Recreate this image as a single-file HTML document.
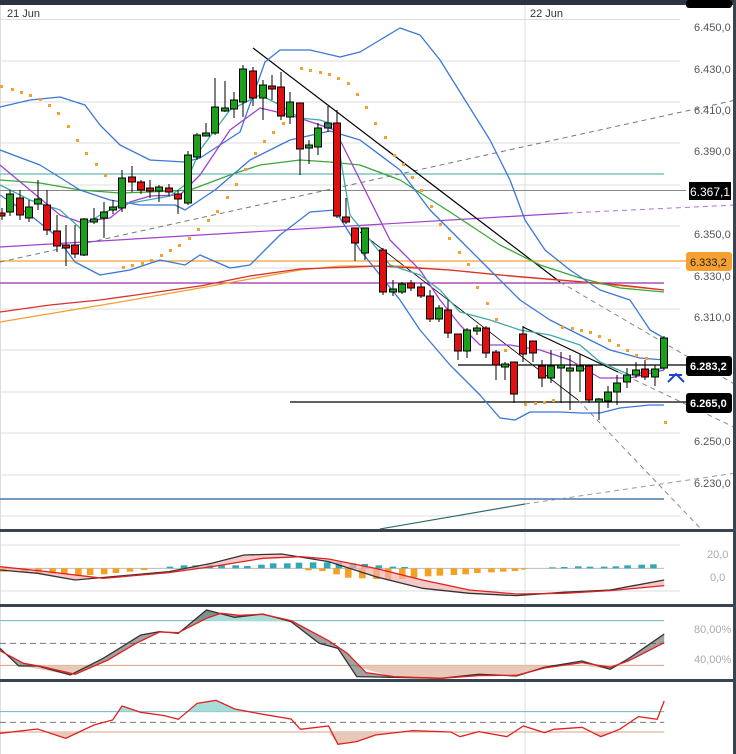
<!DOCTYPE html>
<html><head><meta charset="utf-8"><style>
html,body{margin:0;padding:0;background:#fff;}
svg{display:block;font-family:"Liberation Sans",sans-serif;}
</style></head><body>
<svg width="736" height="754" viewBox="0 0 736 754" xmlns="http://www.w3.org/2000/svg">
<rect width="736" height="754" fill="#fff"/>
<g stroke="#dcdcdc" stroke-width="1">
<line x1="0" y1="19.5" x2="680" y2="19.5"/><line x1="0" y1="61" x2="680" y2="61"/><line x1="0" y1="102" x2="680" y2="102"/><line x1="0" y1="143" x2="680" y2="143"/><line x1="0" y1="185" x2="680" y2="185"/><line x1="0" y1="226" x2="680" y2="226"/><line x1="0" y1="268" x2="680" y2="268"/><line x1="0" y1="309" x2="680" y2="309"/><line x1="0" y1="350" x2="680" y2="350"/><line x1="0" y1="392" x2="680" y2="392"/><line x1="0" y1="433" x2="680" y2="433"/><line x1="0" y1="475" x2="680" y2="475"/><line x1="0" y1="516" x2="680" y2="516"/>
<line x1="525" y1="5" x2="525" y2="754"/>
<line x1="0.5" y1="5" x2="0.5" y2="754"/>
<line x1="0" y1="545" x2="680" y2="545"/><line x1="0" y1="591" x2="680" y2="591"/>
</g>
<text x="7" y="17" font-size="11" fill="#333">21 Jun</text>
<text x="530" y="17" font-size="11" fill="#333">22 Jun</text>
<g font-size="11" fill="#555">
<text x="694" y="31">6.450,0</text><text x="694" y="73">6.430,0</text><text x="694" y="114">6.410,0</text><text x="694" y="155">6.390,0</text><text x="694" y="238">6.350,0</text><text x="694" y="280">6.330,0</text><text x="694" y="321">6.310,0</text><text x="694" y="445">6.250,0</text><text x="694" y="487">6.230,0</text>
</g>
<g font-size="11" fill="#aaa">
<text x="707" y="558">20,0</text><text x="710" y="581">0,0</text><text x="694" y="633">80,00%</text><text x="694" y="663">40,00%</text>
</g>
<line x1="0" y1="174" x2="664" y2="174" stroke="#3aa6a6" stroke-width="1"/>
<line x1="0" y1="190.5" x2="686" y2="190.5" stroke="#888" stroke-width="1"/>
<line x1="0" y1="261" x2="686" y2="261" stroke="#f0a030" stroke-width="1.3"/>
<line x1="0" y1="283" x2="664" y2="283" stroke="#9a2aa8" stroke-width="1.3"/>
<line x1="0" y1="499" x2="664" y2="499" stroke="#1f5fa8" stroke-width="1.3"/>
<line x1="458" y1="365" x2="690" y2="365" stroke="#000" stroke-width="1.2"/>
<line x1="290" y1="402" x2="690" y2="402" stroke="#000" stroke-width="1.2"/>
<line x1="0" y1="262" x2="736" y2="100" stroke="#777" stroke-width="1" stroke-dasharray="5,4"/>
<line x1="0" y1="247" x2="568" y2="213" stroke="#a040d0" stroke-width="1.2"/>
<line x1="568" y1="213" x2="736" y2="205" stroke="#b070e0" stroke-width="1" stroke-dasharray="5,4"/>
<line x1="253" y1="48" x2="560" y2="282" stroke="#000" stroke-width="1.2"/>
<line x1="560" y1="282" x2="736" y2="385" stroke="#888" stroke-width="1" stroke-dasharray="5,4"/>
<line x1="523" y1="327" x2="618" y2="372" stroke="#000" stroke-width="1.2"/>
<line x1="618" y1="372" x2="736" y2="428" stroke="#888" stroke-width="1" stroke-dasharray="5,4"/>
<line x1="360" y1="232" x2="578" y2="400" stroke="#000" stroke-width="0.8"/>
<line x1="578" y1="400" x2="702" y2="530" stroke="#888" stroke-width="1" stroke-dasharray="5,4"/>
<line x1="380" y1="529" x2="525" y2="504" stroke="#2a6a6a" stroke-width="1.2"/>
<line x1="525" y1="504" x2="736" y2="473" stroke="#999" stroke-width="1" stroke-dasharray="5,4"/>
<g fill="none" stroke-width="1.3" stroke-linejoin="round">
<polyline stroke="#f0a030" points="0,322 60,312 120,302 200,288 250,279 300,270 340,266 400,266 460,271 520,277 580,282 664,290"/>
<polyline stroke="#d83030" points="0,312 50,305 100,300 200,286 250,276 300,269 380,266 450,270 500,275 560,280 620,285 664,290"/>
<polyline stroke="#3aa83a" points="0,180 40,183 80,190 120,193 150,192 190,190 230,175 260,165 300,160 330,162 360,165 400,180 450,212 500,245 540,265 580,278 620,288 664,292"/>
<polyline stroke="#3a78d8" points="0,107 30,100 60,97 85,105 100,125 120,145 150,160 185,162 200,158 240,132 265,62 280,50 310,50 340,57 360,52 380,40 400,28 420,35 440,60 465,100 490,140 510,180 525,220 545,250 570,270 600,290 630,300 650,330 664,338"/>
<polyline stroke="#3a78d8" points="0,150 40,165 80,190 110,200 140,205 175,205 185,210 215,190 250,160 290,140 330,131 360,140 400,170 430,210 460,240 490,270 520,300 550,320 580,335 610,350 640,358 664,360"/>
<polyline stroke="#3a78d8" points="0,195 30,215 55,235 75,262 100,275 130,270 160,260 185,265 200,255 230,268 250,265 280,235 310,212 335,210 360,250 380,275 400,300 420,330 450,365 480,395 500,418 515,420 530,412 560,412 580,413 600,413 620,408 650,405 664,405"/>
<polyline stroke="#a040d0" points="0,165 30,190 60,215 80,222 110,218 130,202 150,196 180,195 200,175 230,130 260,108 290,115 320,125 335,130 360,180 390,240 420,270 440,300 460,325 480,345 510,345 540,350 570,360 600,378 630,378 664,370"/>
<polyline stroke="#40a8a8" points="0,185 30,200 60,210 80,228 100,215 120,205 170,196 185,185 200,150 230,110 260,95 280,105 300,118 320,120 335,125 350,215 370,240 390,265 420,275 440,290 460,312 490,320 520,330 550,335 580,345 600,362 630,375 664,368"/>
</g>
<g fill="#f5a030">
<rect x="0" y="85" width="3" height="3"/><rect x="11" y="88" width="3" height="3"/><rect x="20" y="91" width="3" height="3"/><rect x="29" y="94" width="3" height="3"/><rect x="39" y="98" width="3" height="3"/><rect x="48" y="104" width="3" height="3"/><rect x="57" y="112" width="3" height="3"/><rect x="67" y="125" width="3" height="3"/><rect x="76" y="139" width="3" height="3"/><rect x="85" y="152" width="3" height="3"/><rect x="95" y="163" width="3" height="3"/><rect x="104" y="174" width="3" height="3"/>
<rect x="122" y="266" width="3" height="3"/><rect x="131" y="264" width="3" height="3"/><rect x="141" y="262" width="3" height="3"/><rect x="150" y="259" width="3" height="3"/><rect x="160" y="254" width="3" height="3"/><rect x="169" y="249" width="3" height="3"/><rect x="178" y="244" width="3" height="3"/><rect x="188" y="237" width="3" height="3"/><rect x="197" y="228" width="3" height="3"/><rect x="207" y="219" width="3" height="3"/><rect x="216" y="210" width="3" height="3"/><rect x="226" y="196" width="3" height="3"/><rect x="235" y="183" width="3" height="3"/><rect x="244" y="168" width="3" height="3"/><rect x="254" y="152" width="3" height="3"/><rect x="263" y="140" width="3" height="3"/><rect x="272" y="131" width="3" height="3"/><rect x="282" y="122" width="3" height="3"/>
<rect x="300" y="67" width="3" height="3"/><rect x="309" y="69" width="3" height="3"/><rect x="319" y="71" width="3" height="3"/><rect x="328" y="73" width="3" height="3"/><rect x="337" y="77" width="3" height="3"/><rect x="347" y="82" width="3" height="3"/><rect x="356" y="93" width="3" height="3"/><rect x="365" y="106" width="3" height="3"/><rect x="374" y="122" width="3" height="3"/><rect x="384" y="136" width="3" height="3"/><rect x="393" y="154" width="3" height="3"/><rect x="402" y="163" width="3" height="3"/><rect x="411" y="176" width="3" height="3"/><rect x="420" y="189" width="3" height="3"/><rect x="430" y="205" width="3" height="3"/><rect x="439" y="223" width="3" height="3"/><rect x="448" y="237" width="3" height="3"/><rect x="458" y="251" width="3" height="3"/><rect x="467" y="263" width="3" height="3"/><rect x="476" y="286" width="3" height="3"/><rect x="486" y="302" width="3" height="3"/><rect x="495" y="318" width="3" height="3"/><rect x="504" y="349" width="3" height="3"/>
<rect x="524" y="403" width="3" height="3"/><rect x="534" y="402" width="3" height="3"/><rect x="543" y="401" width="3" height="3"/><rect x="552" y="399" width="3" height="3"/><rect x="561" y="326" width="3" height="3"/><rect x="571" y="327" width="3" height="3"/><rect x="580" y="329" width="3" height="3"/><rect x="589" y="331" width="3" height="3"/><rect x="598" y="335" width="3" height="3"/><rect x="608" y="339" width="3" height="3"/><rect x="617" y="344" width="3" height="3"/><rect x="626" y="349" width="3" height="3"/><rect x="635" y="354" width="3" height="3"/><rect x="645" y="357" width="3" height="3"/><rect x="664" y="421" width="3" height="3"/>
</g>
<g stroke="#000" stroke-width="1">
<g fill="#e01010">
<line x1="2" y1="208" x2="2" y2="220"/><rect x="-1" y="213" width="6" height="3"/>
<line x1="20" y1="190" x2="20" y2="220"/><rect x="16.5" y="198" width="7" height="17"/>
<line x1="47" y1="190" x2="47" y2="235"/><rect x="43.5" y="205" width="7" height="25"/>
<line x1="57" y1="215" x2="57" y2="252"/><rect x="53.5" y="231" width="7" height="15"/>
<line x1="66" y1="225" x2="66" y2="266"/><rect x="62.5" y="245" width="7" height="3"/>
<line x1="75" y1="225" x2="75" y2="258"/><rect x="71.5" y="245" width="7" height="9"/>
<line x1="132" y1="166" x2="132" y2="192"/><rect x="128.5" y="177" width="7" height="5"/>
<line x1="141" y1="180" x2="141" y2="194"/><rect x="137.5" y="182" width="7" height="8"/>
<line x1="150" y1="180" x2="150" y2="198"/><rect x="146.5" y="188" width="7" height="3"/>
<line x1="169" y1="184" x2="169" y2="196"/><rect x="165.5" y="188" width="7" height="4"/>
<line x1="178" y1="190" x2="178" y2="214"/><rect x="174.5" y="194" width="7" height="5"/>
<line x1="253" y1="67" x2="253" y2="106"/><rect x="249.5" y="71" width="7" height="27"/>
<line x1="272" y1="75" x2="272" y2="100"/><rect x="268.5" y="86" width="7" height="3"/>
<line x1="281" y1="72" x2="281" y2="120"/><rect x="277.5" y="87" width="7" height="29"/>
<line x1="300" y1="103" x2="300" y2="175"/><rect x="296.5" y="103" width="7" height="46"/>
<line x1="337" y1="110" x2="337" y2="218"/><rect x="333.5" y="123" width="7" height="93"/>
<line x1="346" y1="198" x2="346" y2="224"/><rect x="342.5" y="217" width="7" height="5"/>
<line x1="355" y1="228" x2="355" y2="261"/><rect x="351.5" y="228" width="7" height="15"/>
<line x1="383" y1="248" x2="383" y2="295"/><rect x="379.5" y="250" width="7" height="42"/>
<line x1="411" y1="280" x2="411" y2="291"/><rect x="407.5" y="283" width="7" height="5"/>
<line x1="421" y1="283" x2="421" y2="298"/><rect x="417.5" y="287" width="7" height="9"/>
<line x1="430" y1="290" x2="430" y2="322"/><rect x="426.5" y="296" width="7" height="23"/>
<line x1="448" y1="300" x2="448" y2="338"/><rect x="444.5" y="310" width="7" height="23"/>
<line x1="458" y1="334" x2="458" y2="360"/><rect x="454.5" y="334" width="7" height="17"/>
<line x1="486" y1="326" x2="486" y2="358"/><rect x="482.5" y="328" width="7" height="25"/>
<line x1="496" y1="350" x2="496" y2="380"/><rect x="492.5" y="352" width="7" height="13"/>
<line x1="514" y1="362" x2="514" y2="403"/><rect x="510.5" y="362" width="7" height="32"/>
<line x1="523" y1="326" x2="523" y2="362"/><rect x="519.5" y="334" width="7" height="20"/>
<line x1="533" y1="341" x2="533" y2="362"/><rect x="529.5" y="341" width="7" height="12"/>
<line x1="542" y1="360" x2="542" y2="387"/><rect x="538.5" y="366" width="7" height="12"/>
<line x1="589" y1="366" x2="589" y2="403"/><rect x="585.5" y="366" width="7" height="34"/>
<line x1="645" y1="360" x2="645" y2="380"/><rect x="641.5" y="369" width="7" height="8"/>
</g>
<g fill="#1aa01a">
<line x1="10" y1="190" x2="10" y2="216"/><rect x="6.5" y="194" width="7" height="18"/>
<line x1="29" y1="200" x2="29" y2="222"/><rect x="25.5" y="207" width="7" height="11"/>
<line x1="38" y1="180" x2="38" y2="210"/><rect x="34.5" y="199" width="7" height="5"/>
<line x1="84" y1="218" x2="84" y2="256"/><rect x="80.5" y="219" width="7" height="36"/>
<line x1="94" y1="208" x2="94" y2="224"/><rect x="90.5" y="219" width="7" height="3"/>
<line x1="104" y1="202" x2="104" y2="238"/><rect x="100.5" y="212" width="7" height="6"/>
<line x1="113" y1="200" x2="113" y2="214"/><rect x="109.5" y="207" width="7" height="3"/>
<line x1="122" y1="170" x2="122" y2="212"/><rect x="118.5" y="178" width="7" height="30"/>
<line x1="159" y1="185" x2="159" y2="202"/><rect x="155.5" y="187" width="7" height="4"/>
<line x1="188" y1="151" x2="188" y2="205"/><rect x="184.5" y="155" width="7" height="48"/>
<line x1="197" y1="133" x2="197" y2="160"/><rect x="193.5" y="135" width="7" height="22"/>
<line x1="206" y1="123" x2="206" y2="136"/><rect x="202.5" y="133" width="7" height="3"/>
<line x1="215" y1="78" x2="215" y2="135"/><rect x="211.5" y="107" width="7" height="26"/>
<line x1="225" y1="81" x2="225" y2="112"/><rect x="221.5" y="108" width="7" height="3"/>
<line x1="234" y1="92" x2="234" y2="118"/><rect x="230.5" y="100" width="7" height="9"/>
<line x1="243" y1="65" x2="243" y2="117"/><rect x="239.5" y="69" width="7" height="33"/>
<line x1="263" y1="80" x2="263" y2="120"/><rect x="259.5" y="85" width="7" height="13"/>
<line x1="290" y1="92" x2="290" y2="124"/><rect x="286.5" y="102" width="7" height="15"/>
<line x1="309" y1="140" x2="309" y2="164"/><rect x="305.5" y="145" width="7" height="3"/>
<line x1="318" y1="123" x2="318" y2="155"/><rect x="314.5" y="128" width="7" height="19"/>
<line x1="328" y1="106" x2="328" y2="132"/><rect x="324.5" y="123" width="7" height="5" fill="#3a7a6a"/>
<line x1="365" y1="228" x2="365" y2="260"/><rect x="361.5" y="228" width="7" height="25"/>
<line x1="393" y1="280" x2="393" y2="296"/><rect x="389.5" y="289" width="7" height="3"/>
<line x1="402" y1="282" x2="402" y2="294"/><rect x="398.5" y="284" width="7" height="8"/>
<line x1="439" y1="305" x2="439" y2="322"/><rect x="435.5" y="308" width="7" height="11"/>
<line x1="467" y1="328" x2="467" y2="358"/><rect x="463.5" y="330" width="7" height="21"/>
<line x1="477" y1="325" x2="477" y2="335"/><rect x="473.5" y="328" width="7" height="3"/>
<line x1="505" y1="362" x2="505" y2="380"/><rect x="501.5" y="364" width="7" height="3"/>
<line x1="551" y1="350" x2="551" y2="383"/><rect x="547.5" y="366" width="7" height="12"/>
<line x1="561" y1="352" x2="561" y2="403"/><rect x="557.5" y="365" width="7" height="3"/>
<line x1="570" y1="355" x2="570" y2="410"/><rect x="566.5" y="368" width="7" height="3"/>
<line x1="580" y1="354" x2="580" y2="392"/><rect x="576.5" y="366" width="7" height="5"/>
<line x1="599" y1="398" x2="599" y2="420"/><rect x="595.5" y="399" width="7" height="3"/>
<line x1="608" y1="386" x2="608" y2="408"/><rect x="604.5" y="392" width="7" height="9"/>
<line x1="617" y1="375" x2="617" y2="405"/><rect x="613.5" y="383" width="7" height="9"/>
<line x1="627" y1="368" x2="627" y2="388"/><rect x="623.5" y="375" width="7" height="7"/>
<line x1="636" y1="362" x2="636" y2="378"/><rect x="632.5" y="370" width="7" height="5"/>
<line x1="655" y1="365" x2="655" y2="386"/><rect x="651.5" y="369" width="7" height="8"/>
<line x1="664" y1="336" x2="664" y2="370"/><rect x="660.5" y="338" width="7" height="30"/>
</g>
</g>
<path d="M668,382 L676,374 L684,382 M669,375 L682,375" stroke="#2040d0" stroke-width="2" fill="none"/>
<rect x="689" y="182" width="42" height="18" fill="#000"/><text x="690" y="196" font-size="12" fill="#fff">6.367,1</text>
<rect x="686" y="252" width="46" height="19" rx="3" fill="#f5a030"/><text x="690" y="266" font-size="11" fill="#222">6.333,2</text>
<rect x="686" y="356" width="46" height="20" rx="3" fill="#000"/><text x="690" y="370" font-size="11" fill="#fff" font-weight="bold">6.283,2</text>
<rect x="686" y="393" width="46" height="20" rx="3" fill="#000"/><text x="690" y="407" font-size="11" fill="#fff" font-weight="bold">6.265,0</text>
<rect x="0" y="0" width="736" height="5" fill="#2b3440"/>
<rect x="686" y="0" width="46" height="8" rx="3" fill="#000"/>
<rect x="0" y="529" width="736" height="3" fill="#3a4450"/>
<rect x="0" y="604" width="736" height="3" fill="#3a4450"/>
<rect x="0" y="679" width="736" height="3" fill="#3a4450"/>
<rect x="733" y="0" width="3" height="754" fill="#3a4450"/>
<g transform="translate(0,530) scale(0.4694,0.3333)">
<line x1="0" y1="115" x2="1415" y2="115" stroke="#bbb" vector-effect="non-scaling-stroke"/>
<g fill="#f5a020">
<rect x="0" y="115" width="14" height="10"/><rect x="45" y="115" width="14" height="12"/><rect x="75" y="115" width="14" height="14"/><rect x="105" y="115" width="14" height="16"/><rect x="130" y="115" width="14" height="18"/><rect x="160" y="115" width="14" height="20"/><rect x="185" y="115" width="14" height="20"/><rect x="215" y="115" width="14" height="18"/><rect x="240" y="115" width="14" height="14"/><rect x="270" y="115" width="14" height="10"/><rect x="300" y="115" width="14" height="5"/>
<rect x="650" y="115" width="14" height="6"/><rect x="680" y="115" width="14" height="8"/><rect x="710" y="115" width="14" height="18"/><rect x="735" y="115" width="14" height="28"/><rect x="765" y="115" width="14" height="30"/><rect x="795" y="115" width="14" height="32"/><rect x="820" y="115" width="14" height="34"/><rect x="850" y="115" width="14" height="32"/><rect x="875" y="115" width="14" height="28"/><rect x="905" y="115" width="14" height="24"/><rect x="930" y="115" width="14" height="22"/><rect x="960" y="115" width="14" height="20"/><rect x="985" y="115" width="14" height="18"/><rect x="1010" y="115" width="14" height="14"/><rect x="1040" y="115" width="14" height="12"/><rect x="1065" y="115" width="14" height="10"/><rect x="1090" y="115" width="14" height="8"/><rect x="1110" y="115" width="10" height="4"/>
</g>
<g fill="#30a8b8">
<rect x="355" y="110" width="14" height="5"/><rect x="385" y="106" width="14" height="9"/><rect x="410" y="106" width="14" height="9"/><rect x="440" y="105" width="14" height="10"/><rect x="465" y="105" width="14" height="10"/><rect x="495" y="106" width="14" height="9"/><rect x="520" y="108" width="14" height="7"/><rect x="550" y="104" width="14" height="11"/><rect x="575" y="100" width="14" height="15"/><rect x="605" y="100" width="14" height="15"/><rect x="630" y="98" width="14" height="17"/><rect x="660" y="97" width="14" height="18"/><rect x="690" y="97" width="14" height="18"/><rect x="715" y="97" width="14" height="18"/><rect x="745" y="100" width="14" height="15"/><rect x="770" y="102" width="14" height="13"/><rect x="800" y="106" width="14" height="9"/><rect x="830" y="110" width="14" height="5"/><rect x="855" y="111" width="14" height="4"/>
<rect x="1170" y="112" width="14" height="3"/><rect x="1195" y="111" width="14" height="4"/><rect x="1225" y="109" width="14" height="6"/><rect x="1250" y="110" width="14" height="5"/><rect x="1280" y="110" width="14" height="5"/><rect x="1305" y="109" width="14" height="6"/><rect x="1330" y="106" width="14" height="9"/><rect x="1360" y="104" width="14" height="11"/><rect x="1385" y="103" width="14" height="12"/>
</g>
<path d="M0,120 L80,130 L160,150 L240,140 L360,125 L450,100 L520,75 L600,72 L700,95 L800,140 L900,175 L1000,190 L1100,197 L1200,187 L1300,180 L1415,150 L1415,167 L1300,182 L1200,190 L1100,192 L1000,180 L900,150 L800,115 L700,87 L640,80 L560,85 L460,108 L360,128 L220,145 L100,125 L0,110 Z" fill="#f4b0b0" opacity="0.7"/>
<polyline fill="none" stroke="#333" stroke-width="1.3" vector-effect="non-scaling-stroke" points="0,120 80,130 160,150 240,140 360,125 450,100 520,75 600,72 700,95 800,140 900,175 1000,190 1100,197 1200,187 1300,180 1415,150"/>
<polyline fill="none" stroke="#e02020" stroke-width="1.3" vector-effect="non-scaling-stroke" points="0,110 100,125 220,145 360,128 460,108 560,85 640,80 700,87 800,115 900,150 1000,180 1100,192 1200,190 1300,182 1415,167"/>
<line x1="0" y1="272" x2="1415" y2="272" stroke="#6ab8c0" vector-effect="non-scaling-stroke"/>
<line x1="0" y1="340" x2="1415" y2="340" stroke="#777" stroke-dasharray="6,4" vector-effect="non-scaling-stroke"/>
<line x1="0" y1="406" x2="1415" y2="406" stroke="#d8a080" vector-effect="non-scaling-stroke"/>
<path d="M40,406 L150,435 L200,406 Z M750,406 L840,442 L940,445 L1020,433 L1100,438 L1160,412 L1175,406 Z M1240,406 L1300,418 L1320,406 Z" fill="#e8c8b8"/>
<path d="M410,272 L440,240 L500,262 L560,252 L620,275 Z" fill="#a8dcd8"/>
<path d="M0,355 L40,408 L80,408 L150,435 L220,385 L300,315 L340,305 L380,310 L440,240 L500,262 L560,252 L620,275 L680,340 L720,355 L760,440 L840,442 L940,445 L1020,433 L1100,438 L1160,412 L1240,393 L1300,418 L1340,385 L1415,312 L1415,338 L1340,392 L1300,412 L1240,398 L1160,414 L1100,436 L1020,437 L940,445 L840,440 L780,428 L740,370 L700,332 L620,272 L560,253 L510,256 L470,250 L440,265 L380,308 L340,306 L290,340 L230,390 L160,433 L90,410 L50,400 L0,362 Z" fill="#555" fill-opacity="0.55"/>
<polyline fill="none" stroke="#333" stroke-width="1.3" vector-effect="non-scaling-stroke" points="0,355 40,408 80,408 150,435 220,385 300,315 340,305 380,310 440,240 500,262 560,252 620,275 680,340 720,355 760,440 840,442 940,445 1020,433 1100,438 1160,412 1240,393 1300,418 1340,385 1415,312"/>
<polyline fill="none" stroke="#e02020" stroke-width="1.3" vector-effect="non-scaling-stroke" points="0,362 50,400 90,410 160,433 230,390 290,340 340,306 380,308 440,265 470,250 510,256 560,253 620,272 700,332 740,370 780,428 840,440 940,445 1020,437 1100,436 1160,414 1240,398 1300,412 1340,392 1415,338"/>
<line x1="0" y1="545" x2="1415" y2="545" stroke="#6ab8c0" vector-effect="non-scaling-stroke"/>
<line x1="0" y1="577" x2="1415" y2="577" stroke="#777" stroke-dasharray="6,4" vector-effect="non-scaling-stroke"/>
<line x1="0" y1="606" x2="1415" y2="606" stroke="#d8a080" vector-effect="non-scaling-stroke"/>
<path d="M95,606 L140,625 L175,606 Z M640,606 L700,606 L720,643 L760,635 L800,615 L880,606 Z M1260,606 L1280,620 L1300,606 Z" fill="#e8c8b8"/>
<path d="M255,545 L260,528 L300,545 Z M400,545 L420,520 L460,511 L500,537 L520,545 Z" fill="#a8dcd8"/>
<polyline fill="none" stroke="#e02020" stroke-width="1.3" vector-effect="non-scaling-stroke" points="0,610 80,597 140,625 200,585 240,570 260,528 300,547 350,557 380,568 420,520 460,511 500,537 560,553 620,567 640,598 700,588 720,643 760,635 800,615 880,602 960,606 980,620 1020,605 1080,620 1115,588 1160,608 1180,598 1240,592 1280,620 1320,598 1360,560 1400,568 1415,513"/>
</g>
</svg>
</body></html>
